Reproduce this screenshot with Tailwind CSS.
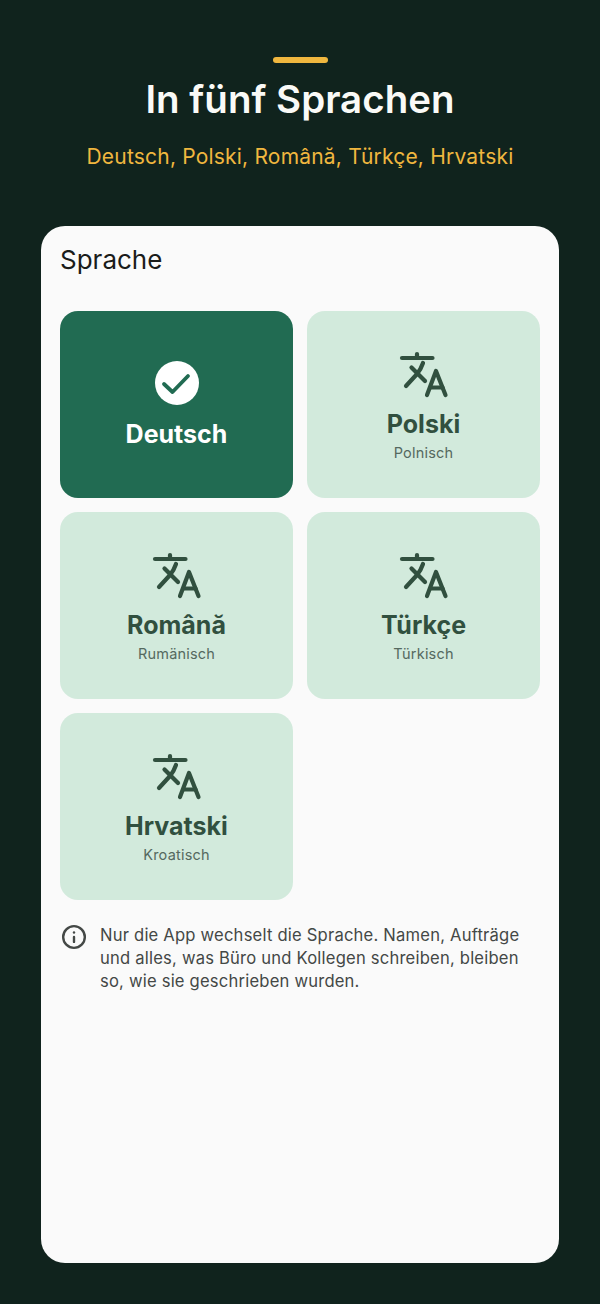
<!DOCTYPE html>
<html lang="de">
<head>
  <meta charset="UTF-8" />
  <meta name="viewport" content="width=device-width, initial-scale=1.0" />
  <title>Sprache</title>
  <script src="https://cdn.jsdelivr.net/npm/@tailwindcss/browser@4"></script>
</head>
<body class="m-0 bg-[#10231d] font-['Inter',sans-serif]">
  <div class="w-[600px] h-[1304px] flex flex-col items-center pt-[57px] pb-[41px] px-[41px]">
    <!-- Kopf -->
    <div class="w-[55px] h-[6px] rounded-full bg-[#f0b73f]"></div>
    <h1 class="mt-[10px] text-[38.5px] leading-[52px] font-semibold text-[#fafaf7]">In fünf Sprachen</h1>
    <p class="mt-[15px] text-[21px] tracking-[0.2px] leading-[34px] text-[#f0b73f]">Deutsch, Polski, Română, Türkçe, Hrvatski</p>

    <!-- Karte -->
    <main class="mt-[52px] w-full flex-1 bg-[#fafafa] rounded-[24px] px-[19px] pt-[17px]">
      <h2 class="text-[26px] leading-[34px] text-[#1a1c1a]">Sprache</h2>

      <div class="mt-[34px] grid grid-cols-2 gap-x-[14px] gap-y-[14.5px]">
        <div class="h-[186.5px] rounded-[18px] bg-[#216b52] flex flex-col items-center pt-[50px]">
          <svg class="w-[44px] h-[44px]" viewBox="0 0 44 44" fill="none">
            <circle cx="22" cy="22" r="22" fill="#fff" />
            <path d="M9 23 L17.5 31 L33 15" stroke="#216b52" stroke-width="3.8" stroke-linecap="round" stroke-linejoin="round" />
          </svg>
          <div class="mt-[12px] text-[25px] leading-[34px] font-bold text-white">Deutsch</div>
        </div>

        <div class="h-[186.5px] rounded-[18px] bg-[#d2eadc] flex flex-col items-center pt-[39px] text-[#31503f]">
          <svg class="w-[52px] h-[50px]" viewBox="398 350 52 50" fill="none" stroke="currentColor" stroke-width="4.2" stroke-linecap="round" stroke-linejoin="round"><path d="M417 354v4" /><path d="M402 358h30.5" /><path d="M406 386 L417 374 Q421 369 423 363" /><path d="M411.5 367.5 L425 381" /><path d="M427 395 L436 371 L445.5 395" /><path d="M430.5 387.5h12" /></svg>
          <div class="mt-[7px] text-[25px] leading-[34px] font-bold">Polski</div>
          <div class="mt-[2px] text-[14.5px] tracking-[0.2px] leading-[20px] text-[#55695f]">Polnisch</div>
        </div>

        <div class="h-[186.5px] rounded-[18px] bg-[#d2eadc] flex flex-col items-center pt-[39px] text-[#31503f]">
          <svg class="w-[52px] h-[50px]" viewBox="398 350 52 50" fill="none" stroke="currentColor" stroke-width="4.2" stroke-linecap="round" stroke-linejoin="round"><path d="M417 354v4" /><path d="M402 358h30.5" /><path d="M406 386 L417 374 Q421 369 423 363" /><path d="M411.5 367.5 L425 381" /><path d="M427 395 L436 371 L445.5 395" /><path d="M430.5 387.5h12" /></svg>
          <div class="mt-[7px] text-[25px] leading-[34px] font-bold">Română</div>
          <div class="mt-[2px] text-[14.5px] tracking-[0.2px] leading-[20px] text-[#55695f]">Rumänisch</div>
        </div>

        <div class="h-[186.5px] rounded-[18px] bg-[#d2eadc] flex flex-col items-center pt-[39px] text-[#31503f]">
          <svg class="w-[52px] h-[50px]" viewBox="398 350 52 50" fill="none" stroke="currentColor" stroke-width="4.2" stroke-linecap="round" stroke-linejoin="round"><path d="M417 354v4" /><path d="M402 358h30.5" /><path d="M406 386 L417 374 Q421 369 423 363" /><path d="M411.5 367.5 L425 381" /><path d="M427 395 L436 371 L445.5 395" /><path d="M430.5 387.5h12" /></svg>
          <div class="mt-[7px] text-[25px] leading-[34px] font-bold">Türkçe</div>
          <div class="mt-[2px] text-[14.5px] tracking-[0.2px] leading-[20px] text-[#55695f]">Türkisch</div>
        </div>

        <div class="h-[186.5px] rounded-[18px] bg-[#d2eadc] flex flex-col items-center pt-[39px] text-[#31503f]">
          <svg class="w-[52px] h-[50px]" viewBox="398 350 52 50" fill="none" stroke="currentColor" stroke-width="4.2" stroke-linecap="round" stroke-linejoin="round"><path d="M417 354v4" /><path d="M402 358h30.5" /><path d="M406 386 L417 374 Q421 369 423 363" /><path d="M411.5 367.5 L425 381" /><path d="M427 395 L436 371 L445.5 395" /><path d="M430.5 387.5h12" /></svg>
          <div class="mt-[7px] text-[25px] leading-[34px] font-bold">Hrvatski</div>
          <div class="mt-[2px] text-[14.5px] tracking-[0.2px] leading-[20px] text-[#55695f]">Kroatisch</div>
        </div>
      </div>

      <!-- Hinweis -->
      <div class="mt-[24px] flex items-start gap-[13px]">
        <svg class="w-[26px] h-[26px] ml-[1px] shrink-0 text-[#444846]" viewBox="0 0 24 24" fill="none" stroke="currentColor" stroke-width="2.2" stroke-linecap="round" stroke-linejoin="round"><circle cx="12" cy="12" r="10" /><path d="M12 16.5v-4.5" /><path d="M12 7.8h.01" /></svg>
        <p class="text-[16.6px] tracking-[0.2px] leading-[23px] text-[#444846]">Nur die App wechselt die Sprache. Namen, Aufträge und alles, was Büro und Kollegen schreiben, bleiben so, wie sie geschrieben wurden.</p>
      </div>
    </main>
  </div>
</body>
</html>
